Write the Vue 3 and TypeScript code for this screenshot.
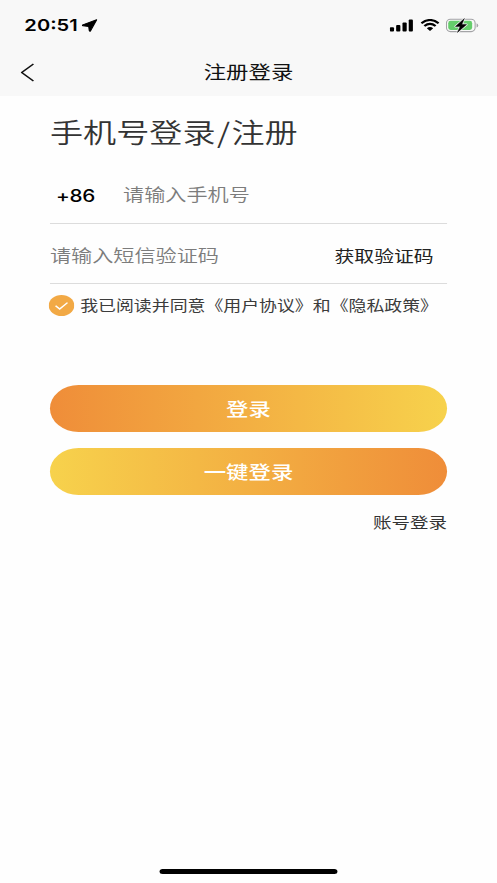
<script setup lang="ts">
import { ref } from 'vue'

const phone = ref('')
const code = ref('')
const agreed = ref(true)
</script>

<template>
  <div class="screen">
    <header class="header">
      <div class="status">
        <div class="status-left">
          <span class="time">20:51</span>
          <svg class="location" viewBox="0 0 16 16" preserveAspectRatio="none">
            <path d="M15.2 1 9 14.6Q8.2 15.6 7.8 14.4L7.2 9.2 1.4 8.4Q.4 8 1.2 7.2Z" stroke="#000" stroke-width="1.2" stroke-linejoin="round" />
          </svg>
        </div>
        <div class="status-right">
          <svg class="signal" viewBox="0 0 23 13" preserveAspectRatio="none">
            <rect x="0" y="8.2" width="4.2" height="4.3" rx="1" />
            <rect x="6.3" y="6" width="4.2" height="6.5" rx="1" />
            <rect x="12.6" y="3.4" width="4.2" height="9.1" rx="1" />
            <rect x="18.8" y=".5" width="4.2" height="12" rx="1" />
          </svg>
          <svg class="wifi" viewBox="0 0 17 12" preserveAspectRatio="none">
            <path d="M1 4.2Q8.5-2.2 16 4.2M3.6 7Q8.5 2.8 13.4 7" fill="none" stroke="#000" stroke-width="2.1" />
            <path d="M5.7 9.2Q8.5 6.9 11.3 9.2L8.5 12Z" />
          </svg>
          <svg class="battery" viewBox="0 0 33 15" preserveAspectRatio="none">
            <rect x=".6" y="1.2" width="28.8" height="12.4" rx="4" fill="none" stroke="#a3a3a6" stroke-width="1.1" />
            <path d="M30.8 5.2Q32.6 6 32.6 7.4T30.8 9.6Z" fill="#a3a3a6" />
            <rect x="2.4" y="2.8" width="24" height="9.2" rx="2.4" fill="#65cd6b" />
            <path d="M18.6.6 9.6 8.4H14.4L11.6 14.4 20.8 6.6H16Z" stroke="#f8f8f8" stroke-width="2" stroke-linejoin="round" />
            <path d="M18.6.6 9.6 8.4H14.4L11.6 14.4 20.8 6.6H16Z" stroke="#000" stroke-width=".5" />
          </svg>
        </div>
      </div>
      <nav class="nav">
        <svg class="back" viewBox="0 0 12 20" preserveAspectRatio="none">
          <path d="M11.4 1 .9 10 11.4 19" fill="none" stroke="#111" stroke-width="1.5" />
        </svg>
        <span class="nav-title">注册登录</span>
      </nav>
    </header>

    <main class="content">
      <h1 class="title">手机号登录<span class="slash">/</span>注册</h1>
      <div class="field phone">
        <span class="prefix">+86</span>
        <input v-model="phone" class="input" type="tel" placeholder="请输入手机号" />
      </div>
      <div class="field code">
        <input v-model="code" class="input" type="text" placeholder="请输入短信验证码" />
        <span class="get-code">获取验证码</span>
      </div>
      <div class="agreement" @click="agreed = !agreed">
        <svg class="check" viewBox="0 0 21 21">
          <circle cx="10.5" cy="10.5" r="10.5" fill="#f2a945" />
          <path v-if="agreed" d="M5.6 10.8 9 14 15.4 7.6" fill="none" stroke="#fff" stroke-width="1.3" />
        </svg>
        <span class="agree-text">我已阅读并同意《用户协议》和《隐私政策》</span>
      </div>
      <button class="btn login">登录</button>
      <button class="btn one-tap">一键登录</button>
      <a class="account">账号登录</a>
    </main>
    <div class="home-bar"></div>
  </div>
</template>

<style>
body {
  margin: 0;
  overflow: hidden;
  background: #fefefe;
}
</style>

<style scoped>
.screen {
  display: flex;
  flex-direction: column;
  width: 408px;
  height: 883px;
  transform: scaleX(1.21814);
  transform-origin: 0 0;
  background: #fefefe;
  font-family: "Noto Sans CJK SC", sans-serif;
  color: #333;
}
.header {
  height: 96px;
  flex: none;
  background: #f8f8f8;
}
.status {
  display: flex;
  justify-content: space-between;
  align-items: center;
  height: 50px;
  padding: 0 15.5px 0 20px;
}
.status-left,
.status-right {
  display: flex;
  align-items: center;
}
.time {
  font: 600 16.5px/50px Inter, sans-serif;
  color: #000;
}
.location {
  width: 13px;
  height: 13px;
  margin-left: 3.6px;
}
.signal {
  width: 19px;
  height: 13px;
}
.wifi {
  width: 16px;
  height: 12px;
  margin-left: 6px;
}
.battery {
  width: 27px;
  height: 15px;
  margin-left: 5px;
}
.nav {
  position: relative;
  display: flex;
  justify-content: center;
  height: 46px;
}
.back {
  position: absolute;
  left: 17.4px;
  top: 13px;
  width: 11px;
  height: 19px;
}
.nav-title {
  font-size: 18.4px;
  line-height: 42px;
  color: #111;
}
.content {
  display: flex;
  flex-direction: column;
  flex: 1;
  padding: 0 41px;
}
.title {
  margin: 15px 0 1px;
  font-size: 27.2px;
  line-height: 40px;
  font-weight: 350;
}
.slash {
  margin: 0 1.2px;
}
.field {
  display: flex;
  align-items: center;
  box-sizing: border-box;
  border-bottom: 1px solid #dcdcdc;
}
.phone {
  height: 60px;
  margin-top: 12px;
}
.code {
  height: 60px;
  padding: 3px 11px 0 0;
}
.prefix {
  width: 55px;
  padding: 4px 0 0 5px;
  font: 500 17px/24px Inter, sans-serif;
  letter-spacing: -0.3px;
  color: #000;
}
.input {
  flex: 1;
  min-width: 0;
  height: 28px;
  padding: 0 0 2px;
  box-sizing: border-box;
  border: 0;
  outline: 0;
  background: none;
  font-family: inherit;
  font-size: 17.35px;
  font-weight: 350;
}
.phone .input {
  margin-top: 1px;
}
.input::placeholder {
  color: #7c7c7c;
  opacity: 1;
}
.get-code {
  font-size: 16.3px;
  line-height: 24px;
  color: #222;
}
.agreement {
  display: flex;
  align-items: center;
  height: 22px;
  margin: 10px 0 0 -0.7px;
  white-space: nowrap;
}
.check {
  flex: none;
  width: 21px;
  height: 21px;
}
.agree-text {
  margin-left: 4.5px;
  font-size: 14.7px;
  line-height: 22px;
  color: #3c3c3c;
}
.btn {
  height: 47px;
  padding: 0;
  border: 0;
  border-radius: 23.5px;
  font-family: inherit;
  font-size: 18.4px;
  font-weight: 500;
  line-height: 47px;
  color: #fff;
}
.login {
  margin-top: 69px;
  background: linear-gradient(90deg, #ef8d39, #f7d24c);
}
.one-tap {
  margin-top: 16px;
  background: linear-gradient(90deg, #f7d24c, #ef8d39);
}
.account {
  align-self: flex-end;
  margin-top: 15px;
  font-size: 15.2px;
  line-height: 22px;
}
.home-bar {
  align-self: center;
  width: 146px;
  height: 5px;
  margin-bottom: 9.5px;
  border-radius: 3px;
  background: #000;
}
</style>
